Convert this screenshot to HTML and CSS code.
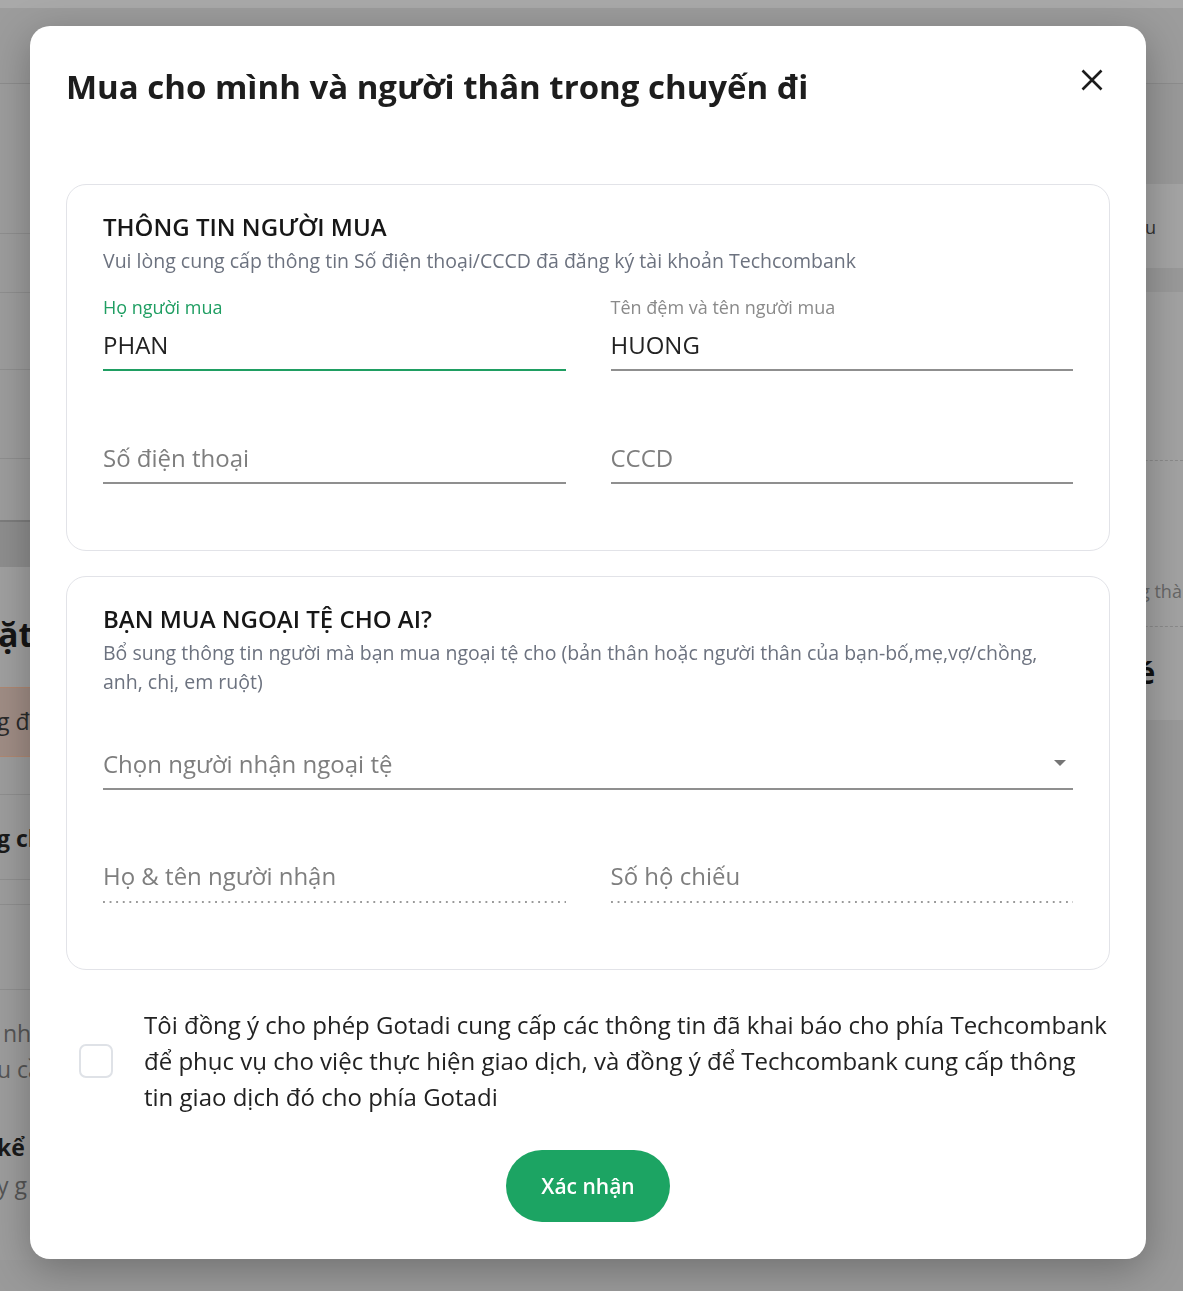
FILE: index.html
```html
<!DOCTYPE html>
<html lang="vi">
<head>
<meta charset="utf-8">
<title>Mua cho mình và người thân trong chuyến đi</title>
<link rel="stylesheet" href="styles.css">
</head>
<body>
<div class="page">
  <div class="bg-top"></div>
  <div class="bg-head"></div>
  <div class="bg-body">
    <div class="bg-main">
      <div class="r r1"></div>
      <div class="r r2"></div>
      <div class="r r3"></div>
      <div class="r r4"></div>
      <div class="r r5"></div>
      <div class="r r6"></div>
      <div class="r r7"><span class="bg-big">ặt</span></div>
      <div class="r r8"><span class="bg-txt">g đ</span></div>
      <div class="r r9"></div>
      <div class="r r10"><span class="bg-bold">g ch</span></div>
      <div class="r r11"></div>
      <div class="r r12"></div>
      <div class="r r13"><span class="bg-gray">&nbsp;nh</span><span class="bg-gray">u cầ</span></div>
      <div class="r r14"><span class="bg-bold2">kể t</span><span class="bg-gray">y g</span></div>
    </div>
    <div class="bg-side">
      <div class="side-card1"><span class="side-txt">u</span></div>
      <div class="side-card2">
        <div class="side-sec1"></div>
        <div class="side-sec2"><span class="side-gray">g thành</span></div>
        <div class="side-sec3"><span class="side-bold">Vé</span></div>
      </div>
    </div>
  </div>
</div>

<div class="modal">
  <div class="modal-head">
    <h1 class="modal-title">Mua cho mình và người thân trong chuyến đi</h1>
    <button class="close-btn" type="button" aria-label="Đóng">
      <svg width="22" height="22" viewBox="0 0 22 22"><path d="M1.5 1.5 L20.5 20.5 M20.5 1.5 L1.5 20.5" stroke="#1c1c1c" stroke-width="2.6" fill="none"/></svg>
    </button>
  </div>

  <section class="card">
    <h2 class="card-title">THÔNG TIN NGƯỜI MUA</h2>
    <p class="card-desc">Vui lòng cung cấp thông tin Số điện thoại/CCCD đã đăng ký tài khoản Techcombank</p>
    <div class="grid">
      <div class="field focused">
        <div class="label">Họ người mua</div>
        <div class="input">PHAN</div>
      </div>
      <div class="field">
        <div class="label">Tên đệm và tên người mua</div>
        <div class="input">HUONG</div>
      </div>
      <div class="field">
        <div class="label"></div>
        <div class="input placeholder">Số điện thoại</div>
      </div>
      <div class="field">
        <div class="label"></div>
        <div class="input placeholder">CCCD</div>
      </div>
    </div>
  </section>

  <section class="card card2">
    <h2 class="card-title">BẠN MUA NGOẠI TỆ CHO AI?</h2>
    <p class="card-desc">Bổ sung thông tin người mà bạn mua ngoại tệ cho (bản thân hoặc người thân của bạn-bố,mẹ,vợ/chồng, anh, chị, em ruột)</p>
    <div class="grid">
      <div class="field full select-field">
        <div class="label"></div>
        <div class="input placeholder select">
          <span>Chọn người nhận ngoại tệ</span>
          <svg class="caret" width="12" height="6" viewBox="0 0 12 6"><path d="M0 0 H12 L6 6 Z" fill="#757575"/></svg>
        </div>
      </div>
      <div class="field">
        <div class="label"></div>
        <div class="input placeholder dotted">Họ &amp; tên người nhận</div>
      </div>
      <div class="field">
        <div class="label"></div>
        <div class="input placeholder dotted">Số hộ chiếu</div>
      </div>
    </div>
  </section>

  <div class="agree">
    <span class="checkbox"></span>
    <p class="agree-text">Tôi đồng ý cho phép Gotadi cung cấp các thông tin đã khai báo cho phía Techcombank để phục vụ cho việc thực hiện giao dịch, và đồng ý để Techcombank cung cấp thông tin giao dịch đó cho phía Gotadi</p>
  </div>

  <div class="actions">
    <button class="confirm" type="button">Xác nhận</button>
  </div>
</div>
</body>
</html>
```

FILE: styles.css
```css
html, body {
  margin: 0;
  padding: 0;
}
body {
  background: #9a9a9a;
  font-family: "Open Sans", "Noto Sans", sans-serif;
  height: 1291px;
  overflow: hidden;
}

/* ---------- backdrop page (dimmed) ---------- */
.bg-top { height: 8px; background: #a9a9a9; }
.bg-head { height: 75px; background: #9c9c9c; border-bottom: 1px solid #8d8d8d; }
.bg-body { display: flex; }
.bg-main { width: 918px; background: #9d9d9d; }
.r { border-bottom: 1px solid #8f8f8f; box-sizing: border-box; overflow: hidden; white-space: nowrap; }
.r1 { height: 150px; }
.r2 { height: 59px; }
.r3 { height: 77px; }
.r4 { height: 89px; }
.r5 { height: 63px; border-bottom: 2px solid #7d7d7d; }
.r6 { height: 45px; background: #8e8e8e; border-bottom: none; }
.r7 { height: 120px; background: #a0a0a0; border-bottom: none; padding-top: 44px; }
.r8 { height: 70px; background: #a08d85; border-top: 1px solid #b08872; border-bottom: 1px solid #b08872; padding-top: 17px; }
.r9 { height: 38px; }
.r10 { height: 85px; padding-top: 27px; }
.r11 { height: 25px; }
.r12 { height: 85px; }
.r13 { height: 110px; border-bottom: none; padding-top: 25px; }
.r14 { height: 160px; border-bottom: none; padding-top: 28px; }
.bg-big { display: block; font-size: 34px; font-weight: 700; color: #151515; line-height: 46px; margin-left: -2px; }
.bg-txt { display: block; font-size: 23px; color: #2a2a2a; line-height: 32px; margin-left: -3px; }
.bg-bold { display: block; font-size: 23px; font-weight: 700; color: #1a1a1a; line-height: 32px; margin-left: -3px; }
.bg-bold2 { display: block; font-size: 23px; font-weight: 700; color: #1a1a1a; line-height: 38px; margin-left: -3px; }
.bg-gray { display: block; font-size: 23px; color: #555; line-height: 36px; margin-left: -3px; }
.r14 .bg-gray { line-height: 38px; }

.bg-side { flex: 1; background: #999; padding-top: 100px; overflow: hidden; white-space: nowrap; }
.side-card1 { height: 84px; background: #a4a4a4; padding-left: 227px; box-sizing: border-box; padding-top: 28px; }
.side-txt { font-size: 18px; color: #333; line-height: 30px; }
.side-card2 { margin-top: 24px; background: #a2a2a2; height: 428px; }
.side-sec1 { height: 168px; border-bottom: 1px dashed #8a8a8a; }
.side-sec2 { height: 166px; border-bottom: 1px dashed #8a8a8a; padding-left: 222px; box-sizing: border-box; padding-top: 115px; }
.side-gray { font-size: 18px; color: #676767; line-height: 30px; }
.side-sec3 { padding-left: 200px; padding-top: 26px; }
.side-bold { font-size: 30px; font-weight: 700; color: #111; line-height: 40px; }

/* ---------- modal ---------- */
.modal {
  position: fixed;
  top: 26px;
  left: 30px;
  width: 1116px;
  box-sizing: border-box;
  padding: 38px 36px 37px;
  background: #fff;
  border-radius: 20px;
  box-shadow: 0 10px 40px rgba(0, 0, 0, 0.28);
}
.modal-head {
  display: flex;
  justify-content: space-between;
  align-items: flex-start;
  padding-right: 7px;
  margin-bottom: 74px;
}
.modal-title {
  margin: 0;
  font-size: 33px;
  line-height: 46px;
  font-weight: 700;
  color: #1d1d1d;
}
.close-btn {
  margin-top: 5px;
  padding: 0;
  border: none;
  background: none;
  width: 22px;
  height: 22px;
  display: flex;
}

.card {
  border: 1px solid #e2e3e8;
  border-radius: 20px;
  padding: 25px 36px 66px;
}
.card2 { margin-top: 25px; }
.card-title {
  margin: 0;
  font-size: 24px;
  line-height: 34px;
  font-weight: 600;
  color: #171717;
}
.card-desc {
  margin: 2px 0 0;
  font-size: 19.5px;
  line-height: 29px;
  color: #6c727f;
}
.grid {
  display: grid;
  grid-template-columns: 1fr 1fr;
  column-gap: 45px;
  row-gap: 37px;
  margin-top: 20px;
}
.field.full { grid-column: 1 / span 2; }
.label {
  height: 24px;
  font-size: 18px;
  line-height: 24px;
  color: #8a8a8a;
  margin-bottom: 10px;
}
.select-field .label { margin-bottom: 8px; }
.input {
  font-size: 24px;
  line-height: 32px;
  color: #222;
  padding-bottom: 8px;
  border-bottom: 2px solid #8f8f8f;
}
.focused .label { color: #1f9e62; }
.focused .input { border-bottom-color: #1f9e62; }
.placeholder { color: #7e7e7e; }
.select {
  display: flex;
  justify-content: space-between;
  align-items: center;
}
.caret { margin-right: 7px; margin-top: -2px; }
.dotted {
  border-bottom: none;
  line-height: 30px;
  padding-bottom: 12px;
  background-image: linear-gradient(to right, #9a9a9a 2px, transparent 2px);
  background-size: 6.6px 2px;
  background-repeat: repeat-x;
  background-position: left bottom;
}

.agree {
  display: flex;
  align-items: center;
  margin-top: 37px;
  padding-left: 13px;
}
.checkbox {
  flex: none;
  width: 34px;
  height: 34px;
  box-sizing: border-box;
  border: 2px solid #dfe2e7;
  border-radius: 7px;
  margin-right: 31px;
}
.agree-text {
  margin: 0;
  font-size: 24px;
  line-height: 36px;
  color: #222;
}

.actions {
  display: flex;
  justify-content: center;
  margin-top: 35px;
}
.confirm {
  width: 164px;
  height: 72px;
  border: none;
  border-radius: 36px;
  background: #1ca463;
  color: #fff;
  font-family: "Open Sans", sans-serif;
  font-size: 21px;
  font-weight: 600;
  padding: 0;
}
```
